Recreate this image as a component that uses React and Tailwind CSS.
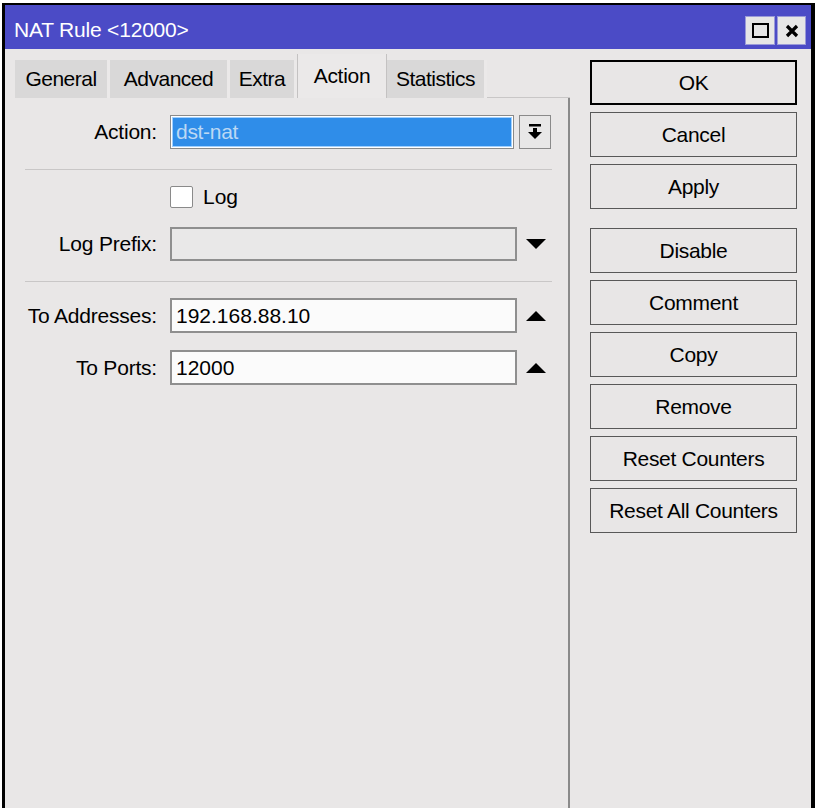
const font = { fontFamily: '"Liberation Sans", Arial, sans-serif' };

const tabs = [
  { name: "General", w: "w-[95px]" },
  { name: "Advanced", w: "w-[120px]" },
  { name: "Extra", w: "w-[67px]" },
  { name: "Action", w: "w-[90px]", active: true },
  { name: "Statistics", w: "w-[100px]" },
];

const buttons = [
  { label: "OK", primary: true },
  { label: "Cancel" },
  { label: "Apply", gapAfter: true },
  { label: "Disable" },
  { label: "Comment" },
  { label: "Copy" },
  { label: "Remove" },
  { label: "Reset Counters" },
  { label: "Reset All Counters" },
];

function Triangle({ up }) {
  return (
    <svg width="20" height="10" viewBox="0 0 20 10" className="block">
      {up ? <polygon points="10,0 20,10 0,10" fill="#000" /> : <polygon points="0,0 20,0 10,10" fill="#000" />}
    </svg>
  );
}

function Label({ children }) {
  return (
    <div className="w-[152px] shrink-0 text-right text-[21px] text-black tracking-[-0.2px]">
      {children}
    </div>
  );
}

function Separator() {
  return <div className="ml-[20px] w-[527px] h-px bg-[#c9c7c7]" />;
}

export default function App() {
  return (
    <div className="w-[816px] h-[808px] bg-white overflow-hidden" style={font}>
      <div className="ml-[2px] mt-[3px] w-[813px] h-[806px] border-l-[3px] border-t-[2px] border-r-[4px] border-black flex flex-col bg-[#e9e7e7]">
        {/* Title bar */}
        <div className="h-[44px] bg-[#4b4bc6] flex items-start justify-between shrink-0">
          <div className="pl-[9px] pt-[13px] text-white text-[21px] leading-[24px] tracking-[-0.2px]">
            NAT Rule &lt;12000&gt;
          </div>
          <div className="flex gap-[2px] pt-[11px] pr-[5px]">
            <div className="w-[30px] h-[29px] bg-[#e6e6e6] border border-[#9a9ad8] flex items-center justify-center">
              <div className="w-[17px] h-[15px] border-2 border-black" />
            </div>
            <div className="w-[29px] h-[29px] bg-[#e6e6e6] border border-[#9a9ad8] flex items-center justify-center">
              <svg width="14" height="14" viewBox="0 0 14 14">
                <path d="M2 2 L12 12 M12 2 L2 12" stroke="#000" strokeWidth="3.2" />
              </svg>
            </div>
          </div>
        </div>

        <div className="flex flex-1">
          {/* Left panel */}
          <div className="w-[565px] shrink-0 flex flex-col">
            <div className="h-[49px] flex items-end shrink-0">
              <div className="w-[10px] h-full" />
              {tabs.map((t) =>
                t.active ? (
                  <div
                    key={t.name}
                    className={`${t.w} h-[44px] bg-[#ebe9e9] border-l border-r border-[#c4c2c2] flex items-center justify-center text-[21px] text-black tracking-[-0.3px]`}
                  >
                    {t.name}
                  </div>
                ) : (
                  <div
                    key={t.name}
                    className={`${t.w} h-[38px] bg-[#d9d8d8] border-r-[3px] border-[#ebe9e9] flex items-center justify-center text-[21px] text-black tracking-[-0.5px]`}
                  >
                    {t.name}
                  </div>
                )
              )}
              <div className="flex-1 h-[1px] bg-[#c9c7c7]" />
            </div>

            <div className="flex-1 border-r-2 border-[#8a8a8a] pt-[17px] flex flex-col">
              {/* Action */}
              <div className="flex items-center h-[34px]">
                <Label>Action:</Label>
                <div className="ml-[13px] w-[344px] h-[34px] border border-[#8a8a8a] p-px bg-white">
                  <div className="w-full h-full bg-[#2f8de9] border border-[#9fd0ff] flex items-center pl-[3px] text-[21px] text-[#bcd8f4] tracking-[-0.3px]">
                    dst-nat
                  </div>
                </div>
                <div className="ml-[5px] w-[32px] h-[34px] border border-[#8a8a8a] bg-[#e8e7e7] flex items-center justify-center">
                  <svg width="14" height="16" viewBox="0 0 14 16">
                    <rect x="1" y="0" width="12" height="2.5" fill="#000" />
                    <rect x="5" y="4" width="4" height="5" fill="#000" />
                    <polygon points="0,8 14,8 7,15" fill="#000" />
                  </svg>
                </div>
              </div>

              <div className="mt-[20px]">
                <Separator />
              </div>

              {/* Log */}
              <div className="flex items-center h-[23px] mt-[15px]">
                <div className="w-[152px] shrink-0" />
                <div className="ml-[13px] w-[23px] h-[22px] bg-white border border-[#8a8a8a] rounded-[2px]" />
                <div className="ml-[10px] text-[21px] text-black">Log</div>
              </div>

              {/* Log Prefix */}
              <div className="flex items-center h-[34px] mt-[19px]">
                <Label>Log Prefix:</Label>
                <div className="ml-[13px] w-[347px] h-[34px] border-2 border-[#8f8f8f] bg-[#e9e8e8]" />
                <div className="ml-[9px]">
                  <Triangle />
                </div>
              </div>

              <div className="mt-[20px]">
                <Separator />
              </div>

              {/* To Addresses */}
              <div className="flex items-center h-[35px] mt-[16px]">
                <Label>To Addresses:</Label>
                <div className="ml-[13px] w-[347px] h-[35px] border-2 border-[#8f8f8f] bg-[#fbfbfb] flex items-center pl-[4px] text-[21px] text-black">
                  192.168.88.10
                </div>
                <div className="ml-[9px]">
                  <Triangle up />
                </div>
              </div>

              {/* To Ports */}
              <div className="flex items-center h-[35px] mt-[17px]">
                <Label>To Ports:</Label>
                <div className="ml-[13px] w-[347px] h-[35px] border-2 border-[#8f8f8f] bg-[#fbfbfb] flex items-center pl-[4px] text-[21px] text-black">
                  12000
                </div>
                <div className="ml-[9px]">
                  <Triangle up />
                </div>
              </div>
            </div>
          </div>

          {/* Right buttons */}
          <div className="flex-1 pl-[20px] pt-[11px] flex flex-col">
            {buttons.map((b) => (
              <div
                key={b.label}
                className={`w-[207px] h-[45px] shrink-0 flex items-center justify-center text-[21px] text-black tracking-[-0.3px] bg-[#e8e6e6] ${
                  b.primary ? "border-2 border-black" : "border-[1.5px] border-[#585858]"
                } ${b.gapAfter ? "mb-[19px]" : "mb-[7px]"}`}
              >
                {b.label}
              </div>
            ))}
          </div>
        </div>
      </div>
    </div>
  );
}
